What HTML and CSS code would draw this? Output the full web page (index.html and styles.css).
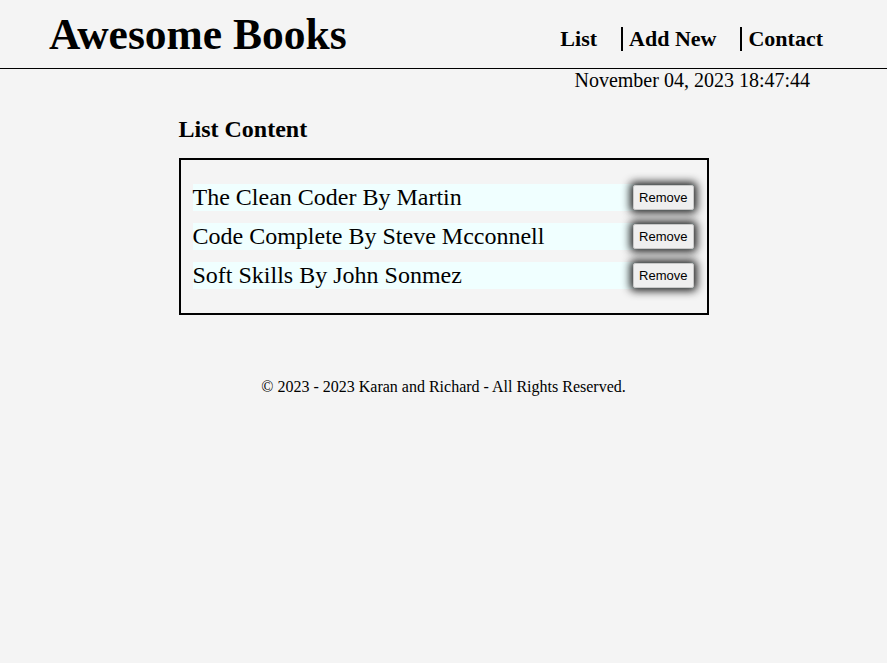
FILE: index.html
```html
<!DOCTYPE html>
<html>
<head>
<meta charset="utf-8">
<link rel="stylesheet" href="styles.css">
</head>
<body>
<header class="header">
  <h1 class="logo">Awesome Books</h1>
  <nav class="nav">
    <a class="nav-link" href="#">List</a>
    <a class="nav-link sep" href="#">Add New</a>
    <a class="nav-link sep" href="#">Contact</a>
  </nav>
</header>
<div class="date">November 04, 2023 18:47:44</div>
<main class="main">
  <h2 class="title">List Content</h2>
  <ul class="books">
    <li class="book"><span class="book-text">The Clean Coder By Martin</span><button class="remove">Remove</button></li>
    <li class="book"><span class="book-text">Code Complete By Steve Mcconnell</span><button class="remove">Remove</button></li>
    <li class="book"><span class="book-text">Soft Skills By John Sonmez</span><button class="remove">Remove</button></li>
  </ul>
</main>
<footer class="footer">© 2023 - 2023 Karan and Richard - All Rights Reserved.</footer>
</body>
</html>
```
FILE: styles.css
```css
html, body {
  margin: 0;
  padding: 0;
  background: #f4f4f4;
  font-family: "Liberation Serif", "Times New Roman", serif;
  color: #000;
}
.header {
  display: flex;
  justify-content: space-between;
  align-items: center;
  height: 68px;
  border-bottom: 1px solid #000;
  padding: 0 64px 0 49px;
}
.logo {
  margin: 0;
  font-size: 43.5px;
  font-weight: bold;
  line-height: 1;
  padding-top: 1px;
}
.nav {
  display: flex;
  align-items: center;
  padding-top: 9px;
}
.nav-link {
  font-size: 22px;
  font-weight: bold;
  color: #000;
  text-decoration: none;
  line-height: 24px;
}
.nav-link.sep {
  border-left: 2px solid #000;
  padding-left: 6px;
  margin-left: 24px;
}
.date {
  text-align: right;
  font-size: 20px;
  padding-right: 77px;
  line-height: 23px;
}
.main {
  width: 530px;
  margin: 0 auto;
}
.title {
  font-size: 24px;
  margin: 23px 0 15px;
  line-height: 28px;
}
.books {
  list-style: none;
  margin: 0;
  padding: 24px 13px 24px 12px;
  border: 2px solid #000;
  display: flex;
  flex-direction: column;
  gap: 12px;
}
.book {
  display: flex;
  align-items: center;
  background: #f0ffff;
  height: 27px;
}
.book-text {
  flex: 1;
  font-family: "Liberation Serif", "Times New Roman", serif;
  font-size: 24px;
  line-height: 27px;
}
.remove {
  font-family: "Liberation Sans", Arial, sans-serif;
  font-size: 13px;
  background: #efefef;
  border: 1px solid #c8c8c8;
  border-radius: 2px;
  padding: 4px 5px;
  box-shadow: 0 0 8px 3px #222;
  color: #000;
}
.footer {
  text-align: center;
  font-size: 16px;
  margin-top: 63px;
}
```
